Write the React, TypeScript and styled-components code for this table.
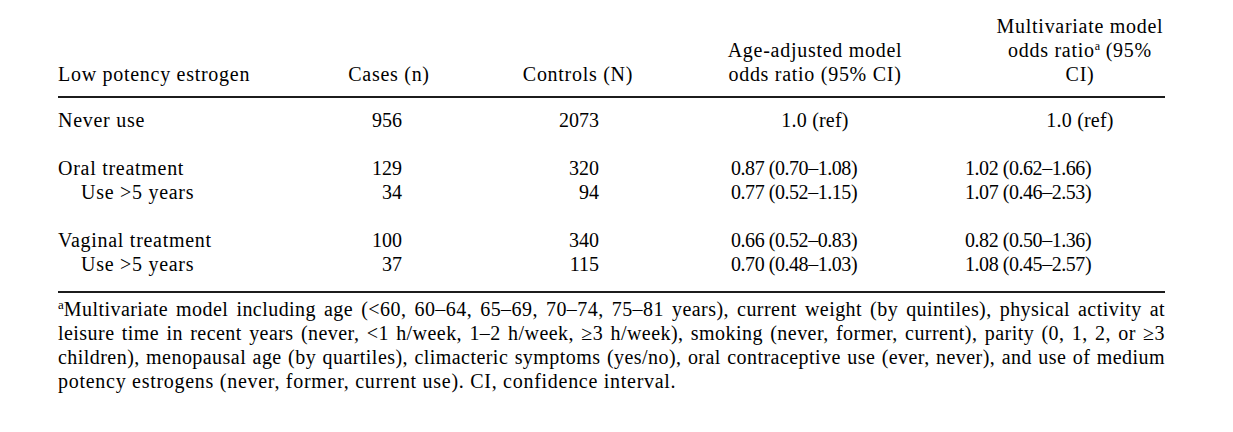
import React from 'react';
import styled, { createGlobalStyle } from 'styled-components';

const GlobalStyle = createGlobalStyle`
  html, body {
    margin: 0;
    padding: 0;
    background: #ffffff;
  }
`;

const Page = styled.div`
  width: 1233px;
  height: 432px;
  padding: 14px 0 0 58px;
  box-sizing: border-box;
  font-family: "Liberation Serif", "Times New Roman", "DejaVu Serif", serif;
  color: #000000;
  font-size: 20px;
  line-height: 24px;
  letter-spacing: 0.72px;
`;

const Table = styled.div`
  width: 1107px;
`;

const COLUMNS = '242px 178px 200px 274px 213px';

const HeadRow = styled.div`
  display: grid;
  grid-template-columns: ${COLUMNS};
  align-items: end;
`;

const Row = styled.div<{ $gap?: boolean }>`
  display: grid;
  grid-template-columns: ${COLUMNS};
  margin-top: ${p => (p.$gap ? '24px' : '0')};
`;

const HeadCell = styled.div<{ $shift?: number }>`
  text-align: center;
  padding-left: ${p => (p.$shift && p.$shift > 0 ? p.$shift : 0)}px;
  padding-right: ${p => (p.$shift && p.$shift < 0 ? -p.$shift : 0)}px;
`;

const LabelCell = styled.div<{ $indent?: boolean }>`
  text-align: left;
  padding-left: ${p => (p.$indent ? '23px' : '0')};
  white-space: nowrap;
`;

const NumCell = styled.div<{ $right: number }>`
  text-align: right;
  padding-right: ${p => p.$right}px;
  letter-spacing: 0;
`;

const RatioCell = styled.div<{ $left: number; $centered?: boolean; $shift?: number }>`
  text-align: ${p => (p.$centered ? 'center' : 'left')};
  padding-left: ${p => (p.$centered ? p.$shift ?? 0 : p.$left)}px;
  white-space: nowrap;
  letter-spacing: ${p => (p.$centered ? '0.2px' : '-0.45px')};
`;

const Rule = styled.div<{ $top: number; $bottom: number }>`
  height: 2px;
  background: #1c1c1c;
  margin-top: ${p => p.$top}px;
  margin-bottom: ${p => p.$bottom}px;
`;

const Sup = styled.sup<{ $size?: number }>`
  font-size: ${p => p.$size ?? 12}px;
  line-height: 0;
  vertical-align: 7px;
  letter-spacing: 0;
`;

const Footnote = styled.div`
  line-height: 24px;
`;

const NoteLine = styled.div<{ $last?: boolean }>`
  text-align: ${p => (p.$last ? 'left' : 'justify')};
  text-align-last: ${p => (p.$last ? 'left' : 'justify')};
  letter-spacing: ${p => (p.$last ? '0.72px' : '0.45px')};
  white-space: nowrap;
`;

type Row = {
  label: string;
  sub?: boolean;
  gap?: boolean;
  cases: string;
  controls: string;
  age: string;
  multi: string;
  ref?: boolean;
};

const rows: Row[] = [
  { label: 'Never use', cases: '956', controls: '2073', age: '1.0 (ref)', multi: '1.0 (ref)', ref: true },
  { label: 'Oral treatment', gap: true, cases: '129', controls: '320', age: '0.87 (0.70–1.08)', multi: '1.02 (0.62–1.66)' },
  { label: 'Use >5 years', sub: true, cases: '34', controls: '94', age: '0.77 (0.52–1.15)', multi: '1.07 (0.46–2.53)' },
  { label: 'Vaginal treatment', gap: true, cases: '100', controls: '340', age: '0.66 (0.52–0.83)', multi: '0.82 (0.50–1.36)' },
  { label: 'Use >5 years', sub: true, cases: '37', controls: '115', age: '0.70 (0.48–1.03)', multi: '1.08 (0.45–2.57)' },
];

const noteLines = [
  'Multivariate model including age (<60, 60–64, 65–69, 70–74, 75–81 years), current weight (by quintiles), physical activity at',
  'leisure time in recent years (never, <1 h/week, 1–2 h/week, ≥3 h/week), smoking (never, former, current), parity (0, 1, 2, or ≥3',
  'children), menopausal age (by quartiles), climacteric symptoms (yes/no), oral contraceptive use (ever, never), and use of medium',
  'potency estrogens (never, former, current use). CI, confidence interval.',
];

export default function App() {
  return (
    <Page>
      <GlobalStyle />
      <Table>
        <HeadRow>
          <LabelCell>Low potency estrogen</LabelCell>
          <HeadCell>Cases (n)</HeadCell>
          <HeadCell>Controls (N)</HeadCell>
          <HeadCell>
            Age-adjusted model
            <br />
            odds ratio (95% CI)
          </HeadCell>
          <HeadCell $shift={43}>
            Multivariate model
            <br />
            odds ratio<Sup>a</Sup> (95%
            <br />
            CI)
          </HeadCell>
        </HeadRow>
        <Rule $top={10} $bottom={10} />
        {rows.map((r, i) => (
          <Row key={i} $gap={r.gap}>
            <LabelCell $indent={r.sub}>{r.label}</LabelCell>
            <NumCell $right={76}>{r.cases}</NumCell>
            <NumCell $right={79}>{r.controls}</NumCell>
            <RatioCell $left={53} $centered={r.ref}>{r.age}</RatioCell>
            <RatioCell $left={13} $centered={r.ref} $shift={43}>{r.multi}</RatioCell>
          </Row>
        ))}
        <Rule $top={15} $bottom={4} />
        <Footnote>
          {noteLines.map((line, i) => (
            <NoteLine key={i} $last={i === noteLines.length - 1}>
              {i === 0 && <Sup $size={13}>a</Sup>}
              {line}
            </NoteLine>
          ))}
        </Footnote>
      </Table>
    </Page>
  );
}
